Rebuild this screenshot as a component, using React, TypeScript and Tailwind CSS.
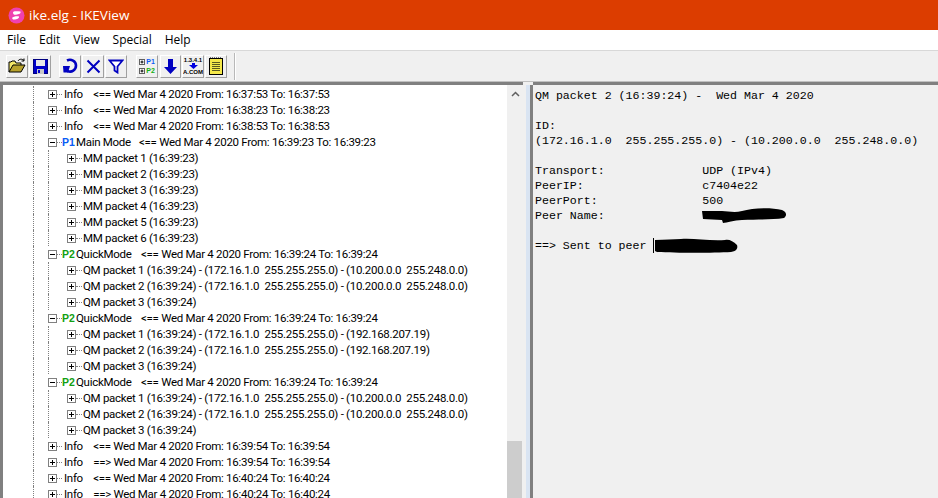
import type { ReactNode } from 'react';

type Row =
  | { kind: 'info'; text: string }
  | { kind: 'phase'; tag: 'P1' | 'P2'; label: string; text: string }
  | { kind: 'packet'; text: string };

const qm1 = '(172.16.1.0  255.255.255.0) - (10.200.0.0  255.248.0.0)';
const qm2 = '(172.16.1.0  255.255.255.0) - (192.168.207.19)';

const rows: Row[] = [
  { kind: 'info', text: 'Info    <== Wed Mar 4 2020 From: 16:37:53 To: 16:37:53' },
  { kind: 'info', text: 'Info    <== Wed Mar 4 2020 From: 16:38:23 To: 16:38:23' },
  { kind: 'info', text: 'Info    <== Wed Mar 4 2020 From: 16:38:53 To: 16:38:53' },
  { kind: 'phase', tag: 'P1', label: 'Main Mode', text: '<== Wed Mar 4 2020 From: 16:39:23 To: 16:39:23' },
  { kind: 'packet', text: 'MM packet 1 (16:39:23)' },
  { kind: 'packet', text: 'MM packet 2 (16:39:23)' },
  { kind: 'packet', text: 'MM packet 3 (16:39:23)' },
  { kind: 'packet', text: 'MM packet 4 (16:39:23)' },
  { kind: 'packet', text: 'MM packet 5 (16:39:23)' },
  { kind: 'packet', text: 'MM packet 6 (16:39:23)' },
  { kind: 'phase', tag: 'P2', label: 'QuickMode', text: '<== Wed Mar 4 2020 From: 16:39:24 To: 16:39:24' },
  { kind: 'packet', text: `QM packet 1 (16:39:24) - ${qm1}` },
  { kind: 'packet', text: `QM packet 2 (16:39:24) - ${qm1}` },
  { kind: 'packet', text: 'QM packet 3 (16:39:24)' },
  { kind: 'phase', tag: 'P2', label: 'QuickMode', text: '<== Wed Mar 4 2020 From: 16:39:24 To: 16:39:24' },
  { kind: 'packet', text: `QM packet 1 (16:39:24) - ${qm2}` },
  { kind: 'packet', text: `QM packet 2 (16:39:24) - ${qm2}` },
  { kind: 'packet', text: 'QM packet 3 (16:39:24)' },
  { kind: 'phase', tag: 'P2', label: 'QuickMode', text: '<== Wed Mar 4 2020 From: 16:39:24 To: 16:39:24' },
  { kind: 'packet', text: `QM packet 1 (16:39:24) - ${qm1}` },
  { kind: 'packet', text: `QM packet 2 (16:39:24) - ${qm1}` },
  { kind: 'packet', text: 'QM packet 3 (16:39:24)' },
  { kind: 'info', text: 'Info    <== Wed Mar 4 2020 From: 16:39:54 To: 16:39:54' },
  { kind: 'info', text: 'Info    ==> Wed Mar 4 2020 From: 16:39:54 To: 16:39:54' },
  { kind: 'info', text: 'Info    <== Wed Mar 4 2020 From: 16:40:24 To: 16:40:24' },
  { kind: 'info', text: 'Info    ==> Wed Mar 4 2020 From: 16:40:24 To: 16:40:24' },
];

const ExpandBox = ({ open }: { open?: boolean }) => (
  <svg width="9" height="9" viewBox="0 0 9 9" className="shrink-0 bg-white">
    <rect x="0.5" y="0.5" width="8" height="8" fill="#fff" stroke="#808080" />
    <path d={open ? 'M2 4.5H7' : 'M2 4.5H7M4.5 2V7'} stroke="#000" fill="none" />
  </svg>
);

const Guide = ({ w }: { w: string }) => (
  <div className={`h-4 shrink-0 border-l border-dotted border-[#808080] ${w}`} />
);

const Dash = ({ w }: { w: string }) => <div className={`shrink-0 border-t border-dotted border-[#808080] ${w}`} />;

const TreeRow = ({ row }: { row: Row }) => (
  <div className="flex h-4 items-center whitespace-pre font-['Roboto',sans-serif] text-[11.5px] leading-4 tracking-[-0.29px] text-black">
    <div className="w-[33px] shrink-0" />
    <Guide w="w-[15px]" />
    {row.kind === 'packet' ? (
      <>
        <Guide w="w-[19px]" />
        <ExpandBox />
        <Dash w="w-[6px]" />
        <span className="ml-px">{row.text}</span>
      </>
    ) : (
      <>
        <ExpandBox open={row.kind === 'phase'} />
        {row.kind === 'info' ? (
          <>
            <Dash w="w-[5px]" />
            <span className="ml-[2px]">{row.text}</span>
          </>
        ) : (
          <>
            <Dash w="w-[5px]" />
            <span
              className={`w-[14px] shrink-0 font-['Liberation_Sans',sans-serif] text-[10.5px] font-bold leading-4 tracking-normal ${
                row.tag === 'P1' ? 'text-[#0a5cf5]' : 'text-[#12a012]'
              }`}
            >
              {row.tag}
            </span>
            <span className={row.tag === 'P1' ? 'w-[63px] shrink-0' : 'w-[65px] shrink-0'}>{row.label}</span>
            <span>{row.text}</span>
          </>
        )}
      </>
    )}
  </div>
);

const ToolButton = ({ w = 'w-[22px]', children }: { w?: string; children: ReactNode }) => (
  <div
    className={`flex h-[23px] shrink-0 items-center justify-center overflow-hidden border border-[#a0a0a0] border-t-white border-l-white bg-[#f0f0f0] ${w}`}
  >
    {children}
  </div>
);

const OpenIcon = () => (
  <svg width="18" height="16" viewBox="0 0 18 16">
    <path d="M1 14V4H3L4 3H7L8 5H13V7" fill="#f2e86a" stroke="#000" />
    <path d="M5 7H17L13 14H1Z" fill="#b7a22c" stroke="#000" />
    <path d="M10 3C11 1 14 0.5 16 2.5M16 0.5V3H13.5" fill="none" stroke="#000" />
  </svg>
);

const SaveIcon = () => (
  <svg width="15" height="15" viewBox="0 0 15 15">
    <rect x="0.5" y="0.5" width="14" height="14" fill="#0000c8" stroke="#000080" />
    <rect x="3" y="1" width="9" height="6" fill="#e8e8e8" />
    <rect x="4" y="10" width="7" height="5" fill="#c8c8c8" />
    <rect x="5" y="11" width="2" height="3" fill="#0000c8" />
  </svg>
);

const RefreshIcon = () => (
  <svg width="16" height="16" viewBox="0 0 16 16">
    <path d="M5 2.5C9 0.5 14 3 14 7.5C14 12 9.5 15 5.5 13" fill="none" stroke="#0000c0" strokeWidth="2.6" />
    <path d="M1 8H8L6 14.5H1.5Z" fill="#0000c0" />
  </svg>
);

const CrossIcon = () => (
  <svg width="15" height="15" viewBox="0 0 15 15">
    <path d="M1.5 1.5L13.5 13.5M13.5 1.5L1.5 13.5" stroke="#0000c0" strokeWidth="2" fill="none" />
  </svg>
);

const FilterIcon = () => (
  <svg width="16" height="15" viewBox="0 0 16 15">
    <path d="M1.5 1.5H14.5L9.5 7.5V13.5L6.5 11.5V7.5Z" fill="#fff" stroke="#0000c0" strokeWidth="1.8" />
  </svg>
);

const ArrowIcon = () => (
  <svg width="15" height="17" viewBox="0 0 15 17">
    <path d="M5 1H10V9H14L7.5 16L1 9H5Z" fill="#0000c0" />
  </svg>
);

const SmallArrow = () => (
  <svg width="9" height="6" viewBox="0 0 9 6" className="block">
    <path d="M3 0H6V2H9L4.5 6L0 2H3Z" fill="#0000e0" />
  </svg>
);

const NotepadIcon = () => (
  <svg width="16" height="18" viewBox="0 0 16 18">
    <rect x="1.5" y="1.5" width="13" height="16" fill="#f4e84a" stroke="#000" />
    <path d="M2 1H14" stroke="#000" strokeDasharray="1 1" />
    <path d="M4 5.5H12M4 7.5H12M4 9.5H12M4 11.5H12M4 13.5H12" stroke="#5a5a20" />
  </svg>
);

const Redaction = ({ w, variant }: { w: number; variant: 1 | 2 }) => (
  <svg width={w} height="17" viewBox={`0 0 ${w} 17`} className="block overflow-visible">
    {variant === 1 ? (
      <path d="M0 3H20C26 3 32 5 40 3C50 0 68 -1 80 2C85 4 85 8 82 10C70 12 55 11 40 12C32 12 25 15 21 15L20 12L1 11Z" fill="#000" />
    ) : (
      <path d="M0 0H1V15H0ZM2 2C12 2 20 1 28 1C40 0 56 3 72 2C76 1 80 3 84 7C85 10 84 13 78 14C60 15 24 15 4 14L2 13Z" fill="#000" />
    )}
  </svg>
);

export default function App() {
  return (
    <div className="flex h-[498px] w-[938px] flex-col overflow-hidden bg-[#f0f0f0] font-['Liberation_Sans',sans-serif]">
      <div className="flex h-[30px] items-center bg-[#dc3d00] pl-2 text-white">
        <svg width="17" height="17" viewBox="0 0 17 17" className="shrink-0">
          <circle cx="8.5" cy="8.5" r="8" fill="#f040b0" />
          <path d="M5 5.5C5 4 8 4 12.5 4.5C13 6 12 7 9 7.5C7 8 5 8 5 5.5ZM4 11C5 9.5 9 9 11 9.5C11.5 11.5 8 13 5 12.5Z" fill="#fff" />
        </svg>
        <span className="ml-[4px] font-['Open_Sans',sans-serif] text-[13.5px]">ike.elg - IKEView</span>
      </div>

      <div className="flex h-[21px] items-center gap-[13px] border-b border-[#d8d8d8] bg-white pl-[7px] font-['Open_Sans',sans-serif] text-[12px] text-black">
        <span>File</span>
        <span>Edit</span>
        <span>View</span>
        <span>Special</span>
        <span>Help</span>
      </div>

      <div className="flex h-[31px] items-center border-b border-[#c0c0c0] pl-[6px]">
        <ToolButton><OpenIcon /></ToolButton>
        <ToolButton w="ml-px w-[22px]"><SaveIcon /></ToolButton>
        <ToolButton w="ml-[8px] w-[22px]"><RefreshIcon /></ToolButton>
        <ToolButton w="ml-px w-[22px]"><CrossIcon /></ToolButton>
        <ToolButton w="ml-px w-[22px]"><FilterIcon /></ToolButton>
        <ToolButton w="ml-[9px] w-[22px]">
          <div className="flex flex-col gap-px text-[7px] font-bold leading-[8px]">
            <div className="flex items-center gap-px">
              <svg width="6" height="6" viewBox="0 0 6 6">
                <rect x="0.5" y="0.5" width="5" height="5" fill="#fff" stroke="#606060" />
                <path d="M1.5 3H4.5M3 1.5V4.5" stroke="#000" />
              </svg>
              <span className="text-[#0a5cf5]">P1</span>
            </div>
            <div className="flex items-center gap-px">
              <svg width="6" height="6" viewBox="0 0 6 6">
                <rect x="0.5" y="0.5" width="5" height="5" fill="#fff" stroke="#606060" />
                <path d="M1.5 3H4.5M3 1.5V4.5" stroke="#000" />
              </svg>
              <span className="text-[#12b012]">P2</span>
            </div>
          </div>
        </ToolButton>
        <ToolButton w="ml-[2px] w-[21px]"><ArrowIcon /></ToolButton>
        <ToolButton w="ml-px w-[22px]">
          <div className="flex flex-col items-center font-['Liberation_Sans',sans-serif] text-[6px] font-bold leading-[6px] text-black">
            <span>1.3.4.1</span>
            <SmallArrow />
            <span>A.COM</span>
          </div>
        </ToolButton>
        <ToolButton w="ml-px w-[22px]"><NotepadIcon /></ToolButton>
        <div className="ml-[7px] h-[27px] w-[2px] border-x border-l-[#b8b8b8] border-r-white" />
      </div>

      <div className="flex min-h-0 flex-1">
        <div className="flex w-[523px] shrink-0 border-l-[3px] border-t-[3px] border-[#808080]">
          <div className="min-w-0 flex-1 overflow-hidden bg-white pt-px">
            {rows.map((row, i) => (
              <div key={i} className="-ml-[3px]">
                <TreeRow row={row} />
              </div>
            ))}
          </div>
          <div className="flex w-[16px] shrink-0 flex-col bg-[#f0f0f0]">
            <div className="flex h-[17px] items-center justify-center">
              <svg width="9" height="6" viewBox="0 0 9 6">
                <path d="M1 5L4.5 1.5L8 5" fill="none" stroke="#606060" strokeWidth="1.5" />
              </svg>
            </div>
            <div className="flex-1" />
            <div className="h-[57px] w-[15px] bg-[#cdcdcd]" />
          </div>
        </div>

        <div className="flex w-[10px] shrink-0 pt-[3px]">
          <div className="w-[3px] bg-[#f0f0f0]" />
          <div className="w-[4px] bg-[#d9e4f2]" />
          <div className="w-[3px] bg-[#808080]" />
        </div>

        <div className="min-w-0 flex-1 border-t-[3px] border-[#808080] bg-[#f0f0f0] pl-[2px] pt-[3px] font-['Liberation_Mono',monospace] text-[11.62px] leading-[15px] text-black">
          <div className="whitespace-pre">QM packet 2 (16:39:24) -  Wed Mar 4 2020</div>
          <div className="h-[15px]" />
          <div className="whitespace-pre">ID:</div>
          <div className="whitespace-pre">(172.16.1.0  255.255.255.0) - (10.200.0.0  255.248.0.0)</div>
          <div className="h-[15px]" />
          <div className="whitespace-pre">Transport:{'              '}UDP (IPv4)</div>
          <div className="whitespace-pre">PeerIP:{'                 '}c7404e22</div>
          <div className="whitespace-pre">PeerPort:{'               '}500</div>
          <div className="flex h-[15px] whitespace-pre">
            <span>Peer Name:{'              '}</span>
            <Redaction w={86} variant={1} />
          </div>
          <div className="h-[15px]" />
          <div className="flex h-[15px] whitespace-pre">
            <span>==&gt; Sent to peer </span>
            <Redaction w={85} variant={2} />
          </div>
        </div>
      </div>
    </div>
  );
}
